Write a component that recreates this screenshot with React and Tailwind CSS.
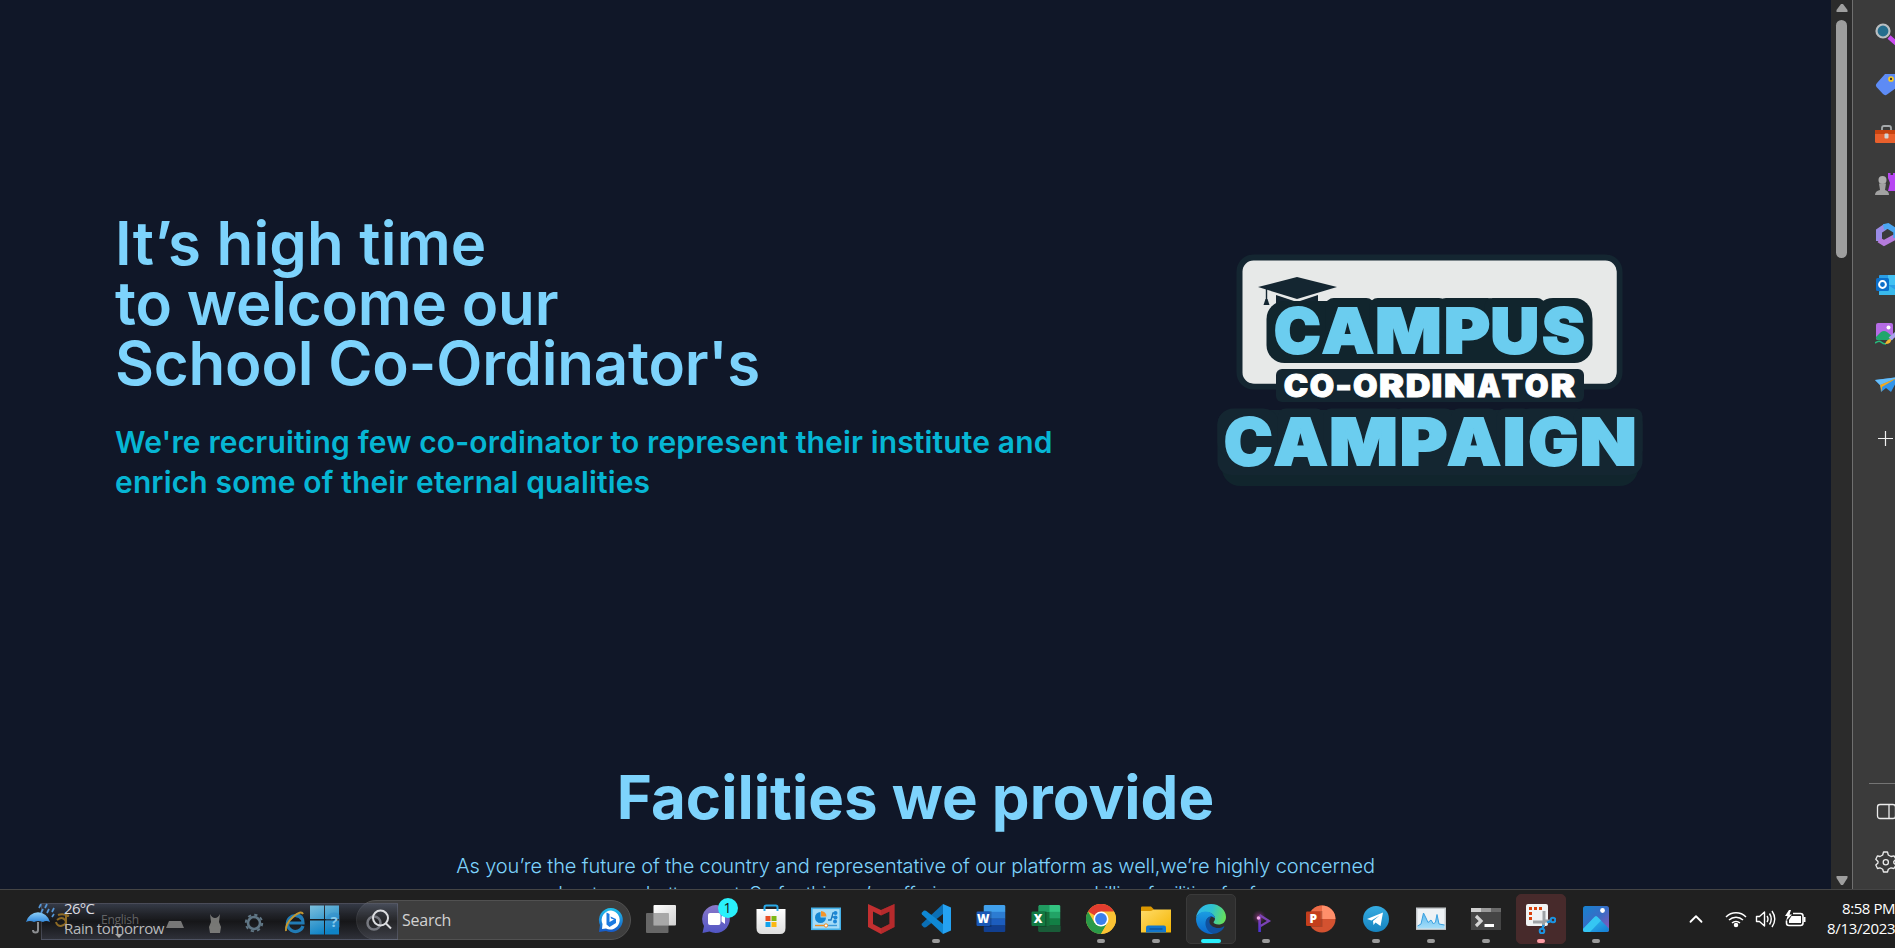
import React from "react";
import { ChevronUp } from "lucide-react";

// Left and right side bearing of each capital, as a share of the font size.
const BEARING = { C: 0.045, A: 0.01, M: 0.055, P: 0.05, U: 0.05, S: 0.03, I: 0.055, G: 0.045, N: 0.055, O: 0.045, R: 0.045, D: 0.05, T: 0.025, "-": 0.06 };

const CAMPUS = [["C", 75.7, 118.7], ["A", 121.7, 174.3], ["M", 177.7, 239], ["P", 246, 287.7], ["U", 292.7, 337], ["S", 343, 383.7]];
const CAMPAIGN = [["C", 26, 70.7], ["A", 73.7, 128], ["M", 131.7, 195], ["P", 202, 245], ["A", 247, 301.3], ["I", 305.3, 323], ["G", 330.3, 376.3], ["N", 382.3, 434]];
const COORD = [["C", 84.7, 107.3], ["O", 110.7, 133.3], ["-", 136.7, 150.7], ["O", 154, 176.7], ["R", 180, 203.3], ["D", 206.7, 229.3], ["I", 232.7, 241], ["N", 245.3, 274], ["A", 277, 300.7], ["T", 301.7, 322.7], ["O", 325.7, 347.7], ["R", 351.7, 374.3]];

function Wordmark({ letters, y, size, fill, weight }) {
  return (
    <text y={y} fontSize={size} fill={fill} stroke={fill} strokeWidth={weight} strokeLinejoin="miter">
      {letters.map(([c, l, r], i) => {
        const b = BEARING[c] * size;
        return <tspan key={i} x={l - b + weight / 2} textLength={r - l + 2 * b - weight} lengthAdjust="spacingAndGlyphs">{c}</tspan>;
      })}
    </text>
  );
}

function CampaignLogo() {
  return (
    <svg width="460" height="260" viewBox="0 0 460 260" className="shrink-0" fontFamily="Inter, 'Liberation Sans', sans-serif" fontWeight="900">
      <rect x="39.5" y="17.5" width="380" height="129" rx="14" fill="#e7e9e8" stroke="#142631" strokeWidth="6" />
      <rect x="43" y="21" width="373.500" height="122.500" rx="12" fill="#e7e9e8" />
      <path d="M97 37 137 47 97 59 58 47Z" fill="#142631" />
      <path d="M76 55 97 62 118 55V68H76Z" fill="#142631" />
      <path d="M66.500 49V60" stroke="#142631" strokeWidth="1.400" />
      <path d="M65.500 59H67.500L69.500 65H63.500Z" fill="#142631" />
      <rect x="66.500" y="61" width="326" height="62" rx="18" fill="#11252d" />
      {CAMPUS.slice(1, 5).map(([c, l, r], i) => <rect key={i} x={l + (c === "A" ? 4 : -8)} y="58" width={r - l + (c === "A" ? -4 : 16)} height="40" rx="8" fill="#11252d" />)}
      <rect x="335" y="58" width="57" height="50" rx="18" fill="#11252d" />
      <Wordmark letters={CAMPUS} y={113} size={62.5} fill="#6bcdef" weight={2} />
      <rect x="76" y="129" width="308" height="33" rx="6" fill="#142631" />
      <Wordmark letters={COORD} y={157} size={31.5} fill="#fff" weight={1} />
      <rect x="22" y="190" width="416" height="56" rx="18" fill="#11252d" />
      <rect x="17.500" y="170" width="425" height="65" rx="14" fill="#142631" />
      {CAMPAIGN.map(([c, l, r], i) => <rect key={i} x={l + (c === "A" ? 4 : -8.5)} y="168.500" width={r - l + (c === "A" ? -8 : 17)} height="50" rx={c === "C" ? 16 : 8} fill="#142631" />)}
      <Wordmark letters={CAMPAIGN} y={225} size={64.5} fill="#6bcdef" weight={2} />
    </svg>
  );
}

const Svg = ({ s = 30, children }) => (
  <svg width={s} height={s} viewBox="0 0 30 30" fill="none" className="shrink-0">{children}</svg>
);

const TaskView = () => (
  <Svg>
    <defs><linearGradient id="tv" x1="0" y1="0" x2="1" y2="1"><stop stopColor="#fff" /><stop offset="1" stopColor="#d0d0d0" /></linearGradient></defs>
    <rect x="7.500" y="1" width="22.500" height="20.500" rx="1" fill="url(#tv)" />
    <rect x="0" y="9" width="22.500" height="20" rx="1" fill="#6f6f6f" fillOpacity=".9" />
    <rect x="7.500" y="9" width="15" height="12.500" fill="#a8a8a8" />
  </Svg>
);

const Chat = () => (
  <div className="relative flex">
    <Svg>
      <defs><linearGradient id="ch" x1="0" y1="0" x2="0" y2="1"><stop stopColor="#8a78c8" /><stop offset="1" stopColor="#5155c4" /></linearGradient></defs>
      <path d="M15 1a14 14 0 1 1-6.500 26.500L1.500 29 3 22A14 14 0 0 1 15 1Z" fill="url(#ch)" />
      <rect x="7" y="9" width="12.500" height="12" rx="2" fill="#fff" />
      <path d="M20.500 12.500 24 10V20L20.500 17.500Z" fill="#fff" />
    </Svg>
    <span className="absolute left-[17px] top-[-6px] flex size-5 items-center justify-center rounded-full bg-[#29f0fb] font-['Open_Sans',sans-serif] text-[14px] leading-none text-[#111]">1</span>
  </div>
);

const Store = () => (
  <Svg>
    <defs><linearGradient id="st" x1="0" y1="0" x2="0" y2="1"><stop stopColor="#fff" /><stop offset="1" stopColor="#dedede" /></linearGradient></defs>
    <path d="M.5 5H29.500V24Q29.500 30 24 30H6Q.5 30 .5 24Z" fill="url(#st)" />
    <path d="M8.500 7V3.200Q8.500 1.500 10.200 1.500H19.800Q21.500 1.500 21.500 3.200V7" stroke="#29a9e8" strokeWidth="2" />
    <rect x="9.500" y="12" width="5" height="5" fill="#e84e24" /><rect x="15.500" y="12" width="5" height="5" fill="#7db713" />
    <rect x="9.500" y="18" width="5" height="5" fill="#14a3ec" /><rect x="15.500" y="18" width="5" height="5" fill="#fbb813" />
  </Svg>
);

const ControlPanel = () => (
  <Svg>
    <rect x=".8" y="4.300" width="28.500" height="21" fill="#a5dcf8" stroke="#45b1e8" strokeWidth="1.600" />
    <path d="M9.500 8A5.500 5.500 0 1 0 15 13.500H9.500Z" fill="#1486d2" />
    <path d="M10 12.500V7A5.500 5.500 0 0 1 15.500 12.500Z" fill="#f2952c" />
    <path d="M17 16H20L22 9H24M21 13H24" stroke="#1c78bd" strokeWidth="1.300" />
    <circle cx="24.500" cy="9" r="2" fill="#1c86d6" /><circle cx="24.500" cy="13.500" r="2" fill="#1c86d6" /><circle cx="24" cy="17.500" r="2" fill="#1c86d6" />
    <path d="M4 21.500H15" stroke="#f08b1d" strokeWidth="1.400" /><path d="M15 21.500H26" stroke="#3b9ad9" strokeWidth="1.400" />
    <circle cx="15" cy="21.500" r="1.700" fill="#fff" stroke="#f08b1d" />
  </Svg>
);

const Shield = () => (
  <Svg>
    <path fillRule="evenodd" d="M2 0 15 6 28.500 0V23L15 30 2 23ZM7 7.500V20L15 24.300 23.500 20V7.500L15 11.500Z" fill="#c22f30" />
    <path d="M15 6 28.500 0V23L15 30V24.300L23.500 20V7.500L15 11.500Z" fill="#aa2628" fillOpacity=".5" />
  </Svg>
);

const VsCode = () => (
  <Svg>
    <path d="M22 0 1 19.500 0.500 21 3 23.500 5 23.300 22 10Z" fill="#0b6fb5" />
    <path d="M22 30 1 10.500 .5 9 3 6.500 5 6.700 22 20Z" fill="#0f88d4" />
    <path d="M22 0 30 3.500V26.500L22 30Z" fill="#25a2f2" />
  </Svg>
);

const Office = ({ letter, rows, badge }) => (
  <Svg>
    <clipPath id={"of" + letter}><rect x="7.500" y="1" width="22" height="27" rx="1.500" /></clipPath>
    <g clipPath={`url(#of${letter})`}>
      {rows.map((c, i) => <rect key={i} x="7.500" y={1 + i * 6.800} width="22" height="7" fill={c} />)}
      {letter === "X" && <g><path d="M7 8H18.500V28H7Z" fill="#15703c" /><path d="M7 1H18.500V8H7Z" fill="#209b60" /><path d="M7 22H30V28H7Z" fill="#195c38" /></g>}
    </g>
    <path d="M7.500 7H15.500V23H7.500Z" fill="#000" fillOpacity=".18" />
    <rect x=".5" y="7.500" width="13.500" height="14.500" rx="1.200" fill={badge} />
    <text x="7.200" y="18.800" textAnchor="middle" fontSize="12" fontWeight="800" fontFamily="'Open Sans', sans-serif" fill="#fff">{letter}</text>
  </Svg>
);
const Word = () => <Office letter="W" rows={["#41a0ec", "#2c7cd2", "#1c5dbe", "#113f90"]} badge="#1a57b6" />;
const Excel = () => <Office letter="X" rows={["#33c481", "#22a366", "#127f45", "#195c38"]} badge="#127a42" />;

const Chrome = () => (
  <Svg>
    <circle cx="15" cy="15" r="15" fill="#fbc334" />
    <path d="M15 15 2 7.500A15 15 0 0 1 28 7.500Z" fill="#e33d2f" />
    <path d="M2 7.500A15 15 0 0 0 15 30L21.500 18.800 8.500 18.800Z" fill="#2a9a48" />
    <path d="M21.500 18.800 15 30A15 15 0 0 0 28 7.500H15Z" fill="#fbc334" />
    <circle cx="15" cy="15" r="7.500" fill="#fff" /><circle cx="15" cy="15" r="5.900" fill="#3b7fec" />
  </Svg>
);

const Explorer = () => (
  <Svg>
    <defs><linearGradient id="fo" x1="0" y1="0" x2="1" y2="1"><stop stopColor="#ffdc69" /><stop offset="1" stopColor="#f4b400" /></linearGradient></defs>
    <path d="M0 8V3.500Q0 2.500 1 2.500H10L13 5.500V9Z" fill="#dc9800" />
    <path d="M0 7H10L13 5.500H30V28.500H0Z" fill="url(#fo)" />
    <path d="M5 28.500V23.500Q5 21.500 7 21.500H23Q25 21.500 25 23.500V28.500Z" fill="#1277cd" />
    <path d="M8.500 25H21.500" stroke="#0a4d92" strokeWidth="1.200" />
  </Svg>
);

const Edge = () => (
  <Svg>
    <defs>
      <linearGradient id="e1" x1="0" y1=".3" x2="1" y2=".5"><stop stopColor="#2fb6ee" /><stop offset=".5" stopColor="#2fc2d0" /><stop offset="1" stopColor="#66e05a" /></linearGradient>
      <linearGradient id="e2" x1="0" y1="0" x2="0" y2="1"><stop stopColor="#1b9de2" /><stop offset="1" stopColor="#0a66cc" /></linearGradient>
    </defs>
    <path d="M0 14C1 6 7 0 15 0 24 0 30 6.500 30 13 30 18 26.500 20.500 22.500 20.500 19.500 20.500 17.500 19.500 17.500 18.300 17.500 17.500 19 17 19 14.500 19 11 15 8 10 8 5 8 1.500 10.500 0 14Z" fill="url(#e1)" />
    <path d="M0 15C.5 10.500 4.500 7.500 9.500 7.500 14.500 7.500 19 11 19 14.500 16 11 10 13 10 19 10 24 14 29 18 29.700A15 15 0 0 1 0 15Z" fill="url(#e2)" />
    <path d="M18 29.700C12 29 9 23 9.500 18.500 10 14.500 13 12 16.500 12 14 13.500 13 16 13.500 18.500 14.500 23 22 26 27.500 22.500 28.300 22 28.500 22.800 28 23.500 26 27 22 29.500 18 29.700Z" fill="#10519f" />
  </Svg>
);

const Playground = () => (
  <Svg>
    <defs><linearGradient id="pg" x1="0" y1="0" x2="0" y2="1"><stop stopColor="#8d3fae" /><stop offset="1" stopColor="#4933d8" /></linearGradient>
    <radialGradient id="pr"><stop stopColor="#c14a9d" stopOpacity=".65" /><stop offset="1" stopColor="#7b268c" stopOpacity="0" /></radialGradient></defs>
    <circle cx="8" cy="13" r="7" fill="url(#pr)" />
    <path d="M8.500 11 18 17 9.500 22" stroke="#7b43b4" strokeWidth="2.200" />
    <rect x="7.300" y="13" width="2.600" height="15" fill="url(#pg)" />
    <circle cx="7.500" cy="14" r="1.800" fill="#f0a7e8" />
  </Svg>
);

const PowerPoint = () => (
  <Svg>
    <circle cx="16" cy="15" r="13.500" fill="#d35230" />
    <path d="M16 1.500A13.500 13.500 0 0 1 29.500 15H16Z" fill="#ff8f6b" />
    <path d="M16 1.500A13.500 13.500 0 0 0 2.500 15H16Z" fill="#ed6c47" />
    <rect x="2.500" y="7" width="14" height="16" fill="#000" fillOpacity=".18" />
    <rect x="0" y="7.500" width="14.500" height="14.500" rx="1.200" fill="#c43e1c" />
    <text x="7.200" y="18.800" textAnchor="middle" fontSize="12" fontWeight="800" fontFamily="'Open Sans', sans-serif" fill="#fff">P</text>
  </Svg>
);

const Telegram = () => (
  <Svg>
    <defs><linearGradient id="tg" x1="0" y1="0" x2="0" y2="1"><stop stopColor="#35ace2" /><stop offset="1" stopColor="#1683bf" /></linearGradient></defs>
    <circle cx="15" cy="15" r="13" fill="url(#tg)" />
    <path d="M6 15 22 8.500 19.500 22 14.500 18.500 12.500 21 12 17 18.500 11.500 10.500 16.500Z" fill="#fff" />
  </Svg>
);

const Monitor = () => (
  <Svg>
    <defs><linearGradient id="mo" x1="0" y1="0" x2="0" y2="1"><stop stopColor="#5fb9ee" /><stop offset="1" stopColor="#a5def9" /></linearGradient></defs>
    <rect x=".7" y="4.200" width="28.600" height="21" fill="#eef2f5" stroke="#c4c8cb" strokeWidth="1.400" />
    <path d="M1.500 24.500V22L5 20 7.500 9 10 14 12 18.500 15 16 17.500 20 19.500 18 21 10.500 23 20 28.500 21V24.500Z" fill="url(#mo)" />
    <path d="M1.500 22 5 20 7.500 9 10 14 12 18.500 15 16 17.500 20 19.500 18 21 10.500 23 20 28.500 21" stroke="#3aa0df" />
  </Svg>
);

const Terminal = () => (
  <Svg>
    <path d="M0 4H10V8H0Z" fill="#cfcfcf" /><path d="M10 4H20V8H10Z" fill="#9a9a9a" /><path d="M20 4H30V8H20Z" fill="#696969" />
    <rect x="0" y="8" width="30" height="18" fill="#454545" />
    <path d="M5 12 10 17 5 22" stroke="#d3d3d3" strokeWidth="3.200" /><path d="M13.500 21.500H23" stroke="#fff" strokeWidth="3" />
  </Svg>
);

const Snip = () => (
  <Svg>
    <rect x="0" y="0" width="22" height="22" rx="2" fill="#f1f3f4" />
    <path d="M4.500 16V4.500H16" stroke="#d8400b" strokeWidth="3" strokeDasharray="3 2" />
    <path d="M18 7V19M7 18H18" stroke="#9fa3a6" strokeWidth="3" />
    <path d="M17 17 24 17M17.500 18V23" stroke="#9aa0a5" strokeWidth="3" />
    <circle cx="27" cy="16" r="2.300" stroke="#1b93e0" strokeWidth="2" /><circle cx="16" cy="27" r="2.300" stroke="#1b93e0" strokeWidth="2" />
    <path d="M21 18.500 25 17M17.500 21 16.500 25" stroke="#1b93e0" strokeWidth="2.400" />
  </Svg>
);

const Photos = () => (
  <Svg>
    <defs><linearGradient id="ph" x1="0" y1="0" x2="1" y2="1"><stop stopColor="#1683d0" /><stop offset=".5" stopColor="#386cc5" /><stop offset="1" stopColor="#9256b9" /></linearGradient>
    <linearGradient id="ph2" x1="0" y1="0" x2="1" y2="1"><stop stopColor="#37c9f5" /><stop offset="1" stopColor="#1279d2" /></linearGradient>
    <clipPath id="phc"><rect x="2" y="2" width="26" height="26" rx="2.500" /></clipPath></defs>
    <g clipPath="url(#phc)"><rect x="2" y="2" width="26" height="26" fill="url(#ph)" />
    <path d="M1 26 13.500 13Q15 11.500 16.500 13L29 25.500V29H1Z" fill="url(#ph2)" /><path d="M1 26 13.500 13Q15 11.500 16.500 13L20 16.500 8 29H1Z" fill="#35c6f3" /></g>
    <circle cx="21.500" cy="6.500" r="2.400" fill="#fff" />
  </Svg>
);

const APPS = [
  [TaskView], [Chat], [Store], [ControlPanel], [Shield], [VsCode, "run"], [Word], [Excel], [Chrome, "run"],
  [Explorer, "run"], [Edge, "active"], [Playground, "run"], [PowerPoint], [Telegram, "run"], [Monitor, "run"],
  [Terminal, "run"], [Snip, "alert"], [Photos, "run"],
];
const TILE = { active: "border border-[#3a3a3a] bg-[#2e2e2e]", alert: "border border-[#472a2b] bg-[#472a2b]" };
const DOT = { run: "w-2 bg-[#9b9b9b]", active: "w-5 bg-[#29eefb]", alert: "w-2 bg-[#fc9ba4]" };

function AppButton({ icon: Icon, state }) {
  return (
    <div className="flex w-[55px] shrink-0 justify-center">
      <div className={`flex h-[50px] w-[50px] flex-col items-center rounded-[5px] ${TILE[state] || "border border-transparent"}`}>
        <div className="flex h-[44px] items-center pt-[4px]"><Icon /></div>
        {DOT[state] && <div className={`h-1 shrink-0 rounded-full ${DOT[state]}`} />}
      </div>
    </div>
  );
}

function Weather() {
  return (
    <div className="relative z-10 flex w-[310px] shrink-0 pl-[26px] font-['Open_Sans',sans-serif] text-[#dcdce0]">
      <svg width="30" height="34" viewBox="0 0 30 34" fill="none" className="mt-[12px]">
        <defs><linearGradient id="um" x1="0" y1="0" x2="0" y2="1"><stop stopColor="#8dd0fa" /><stop offset="1" stopColor="#3188dc" /></linearGradient></defs>
        <path d="M0 20A12.500 13.500 0 0 1 24 20Q20 18 17 20 12 18 8 20 4 18 0 20Z" fill="url(#um)" />
        <path d="M12 20V28Q12 30.500 9.500 30.500T7 28" stroke="#8d8f92" strokeWidth="2" />
        <path d="m15 2-2 4M21 2l-2 4M17 7l-2 4M23 7l-2 4M28 6l-2 4M28 12l-2 3" stroke="#5597d8" strokeWidth="1.700" />
      </svg>
      <div className="mt-[8px] pl-[8px] text-[15px] leading-5">
        <div className="tracking-[-0.7px]">26°C</div>
        <div className="whitespace-nowrap tracking-[-0.35px] text-[#b8b9bb]">Rain tomorrow</div>
      </div>
    </div>
  );
}

function LanguageBar() {
  return (
    <div className="pointer-events-none absolute left-[41px] top-[13px] flex h-[37px] w-[357px] items-center border border-[#8a90a6]/30 bg-linear-to-b from-[#53607f]/40 via-[#0c0d12]/50 to-[#3c4051]/50">
      <svg width="355" height="35" viewBox="0 0 355 35" fill="none">
        <path d="M15 16Q20 12 23 16T19 22Q15 22 14 18M24 11V25M16 11Q21 9 27 12" stroke="#b58627" strokeOpacity=".75" strokeWidth="2" />
        <text x="59" y="20" fontSize="12" textLength="38" fontFamily="'Open Sans', sans-serif" fill="#8c8c8c" fillOpacity=".65">English</text>
        <path d="m73 30 4 4 4-4z" fill="#aaa" />
        <path d="M124 24 127 17H139L142 24Z" fill="#777" />
        <path d="M168 10Q170 14 173 14T178 10L177 18 179 23 178 29H168L167 23 169 18Z" fill="#8f8f8b" fillOpacity=".8" />
        <circle cx="212" cy="19" r="6" stroke="#607685" strokeWidth="2.600" />
        <circle cx="212" cy="19" r="8.200" stroke="#607685" strokeWidth="2" strokeDasharray="3.200 3.240" />
        <path d="M260 15A8 8 0 1 0 261 22M247 19H261Q261 11 254 11" stroke="#217bb5" strokeWidth="3.200" />
        <path d="M244 27Q243 20 251 13T261 10" stroke="#c39732" strokeWidth="2" />
        <circle cx="332" cy="19" r="6.500" stroke="#777980" strokeWidth="2.500" />
      </svg>
    </div>
  );
}

function SearchBox() {
  return (
    <div className="mt-[10px] flex h-[40px] w-[275px] shrink-0 items-center rounded-full border border-[#515151] bg-[#3e3e3e] pl-[14px] pr-[6px]">
      <svg width="22" height="22" viewBox="0 0 22 22" fill="none" stroke="#dcdde0" strokeWidth="2" className="relative z-10"><circle cx="9.500" cy="9" r="7.500" /><path d="m15 14.500 5 5" /></svg>
      <span className="pl-[9px] font-['Open_Sans',sans-serif] text-[16px] tracking-[-0.25px] text-[#d2d2d2]">Search</span>
      <svg width="26" height="26" viewBox="0 0 26 26" className="ml-auto">
        <defs><linearGradient id="bi" x1="0" y1="0" x2="0" y2="1"><stop stopColor="#20c2ee" /><stop offset="1" stopColor="#1758c5" /></linearGradient></defs>
        <path d="M13 1A12 12 0 1 1 8 24L1 25 2 18A12 12 0 0 1 13 1Z" fill="url(#bi)" />
        <path d="M13 3.500A9.500 9.500 0 1 1 8 21.500L4 22 4.500 17A9.500 9.500 0 0 1 13 3.500Z" fill="#fff" />
        <path d="M8.500 5.500 11.500 7V15L16 12.500 13 11.500 12.500 9.500 18 12V16L11.500 20 8.500 17.500Z" fill="#1c7ae0" />
      </svg>
    </div>
  );
}

function Tray() {
  return (
    <div className="ml-auto flex h-[58px] shrink-0 items-center text-white">
      <ChevronUp size={22} strokeWidth={2} className="mr-[18px]" />
      <svg width="22" height="18" viewBox="0 0 22 18" fill="none" stroke="currentColor" strokeWidth="1.500" className="mr-[8px]">
        <path d="M1 7A14 14 0 0 1 21 7M4 10A10 10 0 0 1 18 10M7 13A6 6 0 0 1 15 13" /><circle cx="11" cy="15" r="1.500" fill="currentColor" />
      </svg>
      <svg width="22" height="20" viewBox="0 0 22 20" fill="none" stroke="currentColor" strokeWidth="1.400" className="mr-[8px]">
        <path d="M1.500 7.500H4.500L9.500 3V17L4.500 12.500H1.500Z" strokeLinejoin="round" /><path d="M12 7Q14 10 12 13M14.500 4.500Q18 10 14.500 15.500M17 2Q22.500 10 17 18" />
      </svg>
      <svg width="22" height="18" viewBox="0 0 22 18" fill="none" stroke="currentColor" strokeWidth="1.600">
        <path d="M8 3.500H15.500Q18 3.500 18 6V13Q18 15.500 15.500 15.500H4Q1.500 15.500 1.500 13V10.500" /><path d="M6.500 6H16V13H4V10Z" fill="currentColor" stroke="none" /><path d="M19.500 7V12" strokeWidth="2" /><path d="M4 0 0 6H2.500L1 11 7 4.500H4.500L6 0Z" fill="currentColor" stroke="none" />
      </svg>
      <div className="ml-[20px] w-[68px] whitespace-nowrap text-right font-['Open_Sans',sans-serif] text-[15px] leading-5">
        <div className="mt-[-2px] tracking-[-0.45px]">8:58 PM</div>
        <div className="tracking-[-0.3px]">8/13/2023</div>
      </div>
    </div>
  );
}

function Taskbar() {
  return (
    <footer className="relative flex h-[59px] border-t border-[#454545] bg-[#202020]">
      <Weather />
      <svg width="30" height="30" viewBox="0 0 30 30" className="relative z-10 mt-[15px] shrink-0">
        <defs><linearGradient id="wi" x1="0" y1="0" x2=".4" y2="1"><stop stopColor="#7cbfdc" /><stop offset="1" stopColor="#0f83c6" /></linearGradient></defs>
        <path d="M0 .5H14V14H0ZM15 .5H29V14H15ZM0 15.500H14V29.500H0ZM15 15.500H29V29.500H15Z" fill="url(#wi)" />
        <circle cx="24" cy="16" r="8.500" fill="#2f86c8" fillOpacity=".35" />
        <text x="24" y="21.500" textAnchor="middle" fontSize="15" fontWeight="700" fontFamily="'Open Sans', sans-serif" fill="#84c9eb">?</text>
      </svg>
      <div className="w-[16px] shrink-0" />
      <SearchBox />
      <div className="ml-[2px] mt-[4px] flex">
        {APPS.map(([Icon, state], i) => <AppButton key={i} icon={Icon} state={state} />)}
      </div>
      <Tray />
      <LanguageBar />
    </footer>
  );
}

const SIDE = [
  <g key="a"><path d="m14 14 9 8" stroke="#c94bf0" strokeWidth="4.500" /><circle cx="8" cy="8" r="6.500" fill="#256d8d" stroke="#b9bec1" strokeWidth="2.200" /></g>,
  <g key="b"><path d="M10 1H24V13L12 21.500Q10 23 8 21L1.500 14Q0 12 2 10Z" fill="#5d8bf5" /><circle cx="16" cy="6" r="2" fill="#333" stroke="#f6c927" strokeWidth="1.700" /></g>,
  <g key="c"><path d="M7 7V5Q7 3 9 3H14Q16 3 16 5V7" stroke="#a5a9ab" strokeWidth="1.800" /><rect x="0" y="7" width="24" height="13" rx="1.500" fill="#e9602c" /><path d="M0 7H24V11H0Z" fill="#c7430f" /><rect x="9.500" y="10.500" width="4" height="5" rx="1" fill="#d2d4d5" /></g>,
  <g key="d"><path d="M13 0H15.500V2H18V0H21V2H24V18H13L15 10 13 5Z" fill="#b746f2" /><circle cx="7.500" cy="7" r="4" fill="#adadad" /><path d="M4 10.500H11L10 17Q14 18 14 22H0Q0 18 5 17Z" fill="#a2a2a2" /></g>,
  <g key="e" strokeWidth="6"><path d="M4 18V8L10 4" stroke="#9a8be6" /><path d="M4 17 9 20 20 14" stroke="#b57bdc" strokeWidth="5.500" /><path d="M8.500 4 13 3 21 8V15" stroke="#4ba6f2" strokeWidth="5.500" /></g>,
  <g key="f"><rect x="4" y="2" width="20" height="20" rx="1" fill="#2a9ee5" /><path d="M13 2H24V12H13Z" fill="#42c1f3" /><path d="m13 12 11 7v3H4v-3Z" fill="#39b9ec" /><rect x="1" y="5" width="13" height="13" rx="1.500" fill="#0b6fca" /><circle cx="7.500" cy="11.500" r="3.400" stroke="#fff" strokeWidth="2" /></g>,
  <g key="g"><rect x="1" y="0" width="17" height="17" rx="2" fill="#b56be5" /><circle cx="13.500" cy="4.500" r="2" fill="#fff" /><path d="m1 14 5-5q3-2 6 0l6 5v3H3Q1 17 1 15Z" fill="#20a66b" /><path d="M0 20q4-3 6-1t5 2" stroke="#25bb7c" strokeWidth="1.600" /><path d="m15 16 8-7" stroke="#a9a2ec" strokeWidth="4" /><path d="M10 21q2-5 6-5 1 5-6 5Z" fill="#f3b830" /></g>,
  <g key="h"><path d="M0 7 24 4 16 19 11 15 6 19 5 12Z" fill="#3294e9" /><path d="M0 7 24 4 5 12Z" fill="#66bdf9" /><path d="M5 12 22 5 7 14V19Z" fill="#f3a91c" /></g>,
];

function EdgeSidebar() {
  return (
    <aside className="flex w-[43px] shrink-0 flex-col overflow-hidden border-l border-[#6f6f6f] bg-[#3b3b3b] pl-[22px] pt-[23px]">
      <div className="flex flex-col gap-[26px]">
        {SIDE.map((art, i) => <svg key={i} width="24" height="24" viewBox="0 0 24 24" fill="none" className="shrink-0">{art}</svg>)}
      </div>
      <svg width="24" height="24" viewBox="0 0 24 24" className="mt-[29px] shrink-0" stroke="#f0f0f0" strokeWidth="1.200"><path d="M10.500 5V20M3 12.500H18" /></svg>
      <div className="ml-[-6px] mt-auto h-px shrink-0 bg-[#747474]" />
      <svg width="24" height="24" viewBox="0 0 24 24" className="mt-[16px] shrink-0" fill="none" stroke="#ececec" strokeWidth="1.300"><rect x="2.500" y="4.500" width="18" height="14" rx="2.500" /><path d="M14 5V18" /></svg>
      <svg width="24" height="24" viewBox="0 0 24 24" className="mb-[15px] mt-[26px] shrink-0" fill="none" stroke="#ececec" strokeWidth="1.300" strokeLinejoin="round">
        <path d="M8.500 2H12.500L13.300 5 16 6.500 19 5.800 21 9.200 18.800 11.500V13L21 15 19 18.500 16 17.800 13.300 19.300 12.500 22H8.500L7.700 19.300 5 17.800 2.500 18.500 .8 15 3 13V11.500L.8 9.200 2.500 5.800 5 6.500 7.700 5Z" /><circle cx="10.800" cy="12.200" r="2.600" />
      </svg>
    </aside>
  );
}

function ScrollTrack() {
  return (
    <div className="flex w-[21px] shrink-0 flex-col items-center bg-[#2b2b2b] py-[4px]">
      <svg width="12" height="8" viewBox="0 0 12 8"><path d="M5 0H7L11.500 6V8H.5V6Z" fill="#9e9e9e" /></svg>
      <div className="mt-[8px] h-[238px] w-[11px] rounded-full bg-[#9e9e9e]" />
      <svg width="12" height="9" viewBox="0 0 12 9" className="mt-auto"><path d="M5 9H7L11.500 2V0H.5V2Z" fill="#9e9e9e" /></svg>
    </div>
  );
}

export default function App() {
  return (
    <div className="flex h-[948px] w-[1895px] flex-col overflow-hidden bg-[#101728]">
      <div className="flex h-[889px] shrink-0">
        <main className="h-full w-[1831px] shrink-0 overflow-hidden font-[Inter,sans-serif]">
          <section className="flex h-[767px] pl-[115px] pt-[213px]">
            <div className="w-[1085px] shrink-0">
              <h1 className="whitespace-nowrap text-[60px] font-semibold leading-[60px] text-[#7dd3fc]">
                <span className="block tracking-[0.2px]">It’s high time</span>
                <span className="block tracking-[-0.2px]">to welcome our</span>
                <span className="block tracking-[-0.2px]">School Co-Ordinator's</span>
              </h1>
              <p className="mt-[29px] whitespace-nowrap text-[30px] font-semibold leading-10 text-[#06b6d4]">
                <span className="block tracking-[0.14px]">We're recruiting few co-ordinator to represent their institute and</span>
                <span className="block tracking-[0.14px]">enrich some of their eternal qualities</span>
              </p>
            </div>
            <div className="pt-[27px]"><CampaignLogo /></div>
          </section>
          <section className="flex flex-col items-center whitespace-nowrap text-[#7dd3fc]">
            <h2 className="text-[60px] font-bold leading-[60px]">Facilities we provide</h2>
            <p className="mt-[25px] text-center text-[20px] font-light leading-7 tracking-[-0.14px]">
              As you’re the future of the country and representative of our platform as well,we’re highly concerned
              <br />
              <span className="tracking-[-0.7px]">about your betterment. So for this we’re offering you some up-skilling facilities for free</span>
            </p>
          </section>
        </main>
        <ScrollTrack />
        <EdgeSidebar />
      </div>
      <Taskbar />
    </div>
  );
}
